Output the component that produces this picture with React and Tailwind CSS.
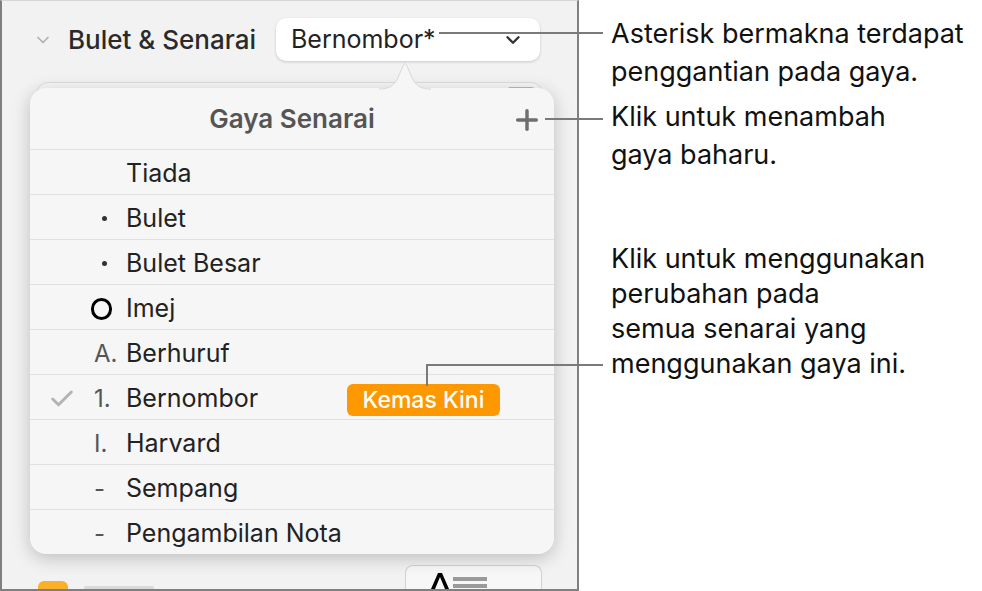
import { ChevronDown, Plus, Check } from "lucide-react";

const rows = [
	{ marker: "", label: "Tiada" },
	{ marker: "dot", label: "Bulet" },
	{ marker: "dot", label: "Bulet Besar" },
	{ marker: "ring", label: "Imej" },
	{ marker: "A.", label: "Berhuruf" },
	{ marker: "1.", label: "Bernombor", checked: true, badge: true },
	{ marker: "I.", label: "Harvard" },
	{ marker: "-", label: "Sempang" },
	{ marker: "-", label: "Pengambilan Nota" },
];

const Marker = ({ type }) => {
	if (type === "dot") {
		return <span className="block w-[5px] h-[5px] rounded-full bg-[#333] ml-[8px]" />;
	}
	if (type === "ring") {
		return <span className="block w-[21px] h-[22px] rounded-full border-[3px] border-black -ml-[3px]" />;
	}
	return <span className="text-[24px] text-[#555] leading-none">{type}</span>;
};

const StyleRow = ({ row }) => (
	<div className="h-[45px] border-t border-[#e0e0e0] flex items-center pt-[3px] relative">
		<div className="w-[64px] flex justify-center">
			{row.checked && <Check className="w-[28px] h-[28px] text-[#b3b3b3]" strokeWidth={2.5} />}
		</div>
		<div className="w-[32px] flex items-center">
			<Marker type={row.marker} />
		</div>
		<span className="text-[25px] text-[#222] leading-none">{row.label}</span>
		{row.badge && (
			<span className="absolute left-[317px] top-[9px] h-[32px] w-[153px] rounded-[6px] bg-[#fe9800] text-white text-[23px] font-medium flex items-center justify-center leading-none">
				Kemas Kini
			</span>
		)}
	</div>
);

const App = () => {
	return (
		<div className="w-[982px] h-[591px] flex bg-white relative overflow-hidden" style={{ fontFamily: "Inter, 'Noto Sans', sans-serif" }}>
			{/* inspector panel */}
			<div className="w-[579px] h-[591px] bg-[#f2f2f2] border-l-2 border-r-2 border-b-2 border-[#7f7f7f] border-t border-t-[#d6d6d6] relative flex flex-col">
				<div className="flex items-center h-[43px] mt-[17px]">
					<ChevronDown className="w-[20px] h-[20px] text-[#b0b0b0] ml-[31px]" strokeWidth={2} />
					<span className="ml-[15px] text-[26px] font-medium text-[#2a2a2a] leading-none">Bulet &amp; Senarai</span>
					<div className="ml-[20px] w-[264px] h-[43px] bg-white rounded-[10px] shadow-[0_1px_3px_rgba(0,0,0,0.18)] flex items-center pl-[15px] pr-[16px]">
						<span className="text-[25px] text-[#222] leading-none flex-1">Bernombor*</span>
						<ChevronDown className="w-[22px] h-[22px] text-[#333]" strokeWidth={2.6} />
					</div>
				</div>

				{/* card peeking behind the popover */}
				<div className="mt-[21px] mx-[34px] h-[40px] rounded-t-[12px] bg-[#f7f7f7] border border-[#dcdcdc] flex justify-end pr-[8px]">
					<span className="block w-[26px] h-[4px] rounded-full bg-[#f5b731] mt-[4px]" />
				</div>

				<div className="flex-1" />
				<div className="flex items-end h-[25px] pl-[36px] pr-[35px]">
					<span className="block w-[30px] h-[8px] rounded-t-[6px] bg-[#fbb027]" />
					<span className="ml-[16px] block w-[70px] h-[3px] rounded-t-[2px] bg-[#dadada]" />
					<div className="flex-1" />
					<div className="w-[137px] h-[24px] rounded-t-[8px] border border-b-0 border-[#d2d2d2] bg-[#f7f7f7] flex items-end pl-[22px]">
						<svg width="24" height="18" viewBox="0 0 24 18">
							<path d="M3 18 L10 2 L14 2 L21 18 L17 18 L12 6 L7 18 Z" fill="#000" />
						</svg>
						<div className="ml-[1px] flex flex-col gap-[3px] mb-[1px]">
							<span className="block w-[34px] h-[4px] bg-[#9a9a9a]" />
							<span className="block w-[34px] h-[4px] bg-[#9a9a9a]" />
						</div>
					</div>
				</div>

				{/* popover */}
				<div className="absolute left-[28px] top-[87px] w-[524px] h-[466px] bg-[#f6f6f6] rounded-[16px] shadow-[0_4px_18px_rgba(0,0,0,0.22)]">
					<svg className="absolute left-[349px] -top-[28px]" width="52" height="30" viewBox="0 0 52 30">
						<path d="M0 29 C10 29 14 26 18 20 L24 6 C25 3 27 3 28 6 L34 20 C38 26 42 29 52 29 Z" fill="#f6f6f6" />
						<path d="M0 29 C10 29 14 26 18 20 L24 6 C25 3 27 3 28 6 L34 20 C38 26 42 29 52 29" fill="none" stroke="#d8d8d8" strokeWidth="1" />
					</svg>
					<div className="h-[61px] flex items-center justify-center relative">
						<span className="text-[26px] font-semibold text-[#555] leading-none">Gaya Senarai</span>
						<Plus className="absolute right-[11px] top-[16px] w-[32px] h-[32px] text-[#6e6e6e]" strokeWidth={2.6} />
					</div>
					{rows.map((row) => (
						<StyleRow key={row.label} row={row} />
					))}
				</div>
			</div>

			{/* callouts */}
			<div className="flex-1 pl-[32px] text-[27px] text-[#111] leading-[38px]">
				<p className="mt-[15px]">Asterisk bermakna terdapat<br />penggantian pada gaya.</p>
				<p className="mt-[7px]">Klik untuk menambah<br />gaya baharu.</p>
				<p className="mt-[67px] leading-[35px]">
					Klik untuk menggunakan<br />perubahan pada<br />semua senarai yang<br />menggunakan gaya ini.
				</p>
			</div>

			{/* leader lines */}
			<span className="absolute left-[439px] top-[32px] w-[164px] h-[2px] bg-[#7a7a7a]" />
			<span className="absolute left-[545px] top-[118px] w-[58px] h-[2px] bg-[#7a7a7a]" />
			<span className="absolute left-[426px] top-[364px] w-[177px] h-[2px] bg-[#7a7a7a]" />
			<span className="absolute left-[426px] top-[364px] w-[2px] h-[22px] bg-[#7a7a7a]" />
		</div>
	);
};

export default App;
